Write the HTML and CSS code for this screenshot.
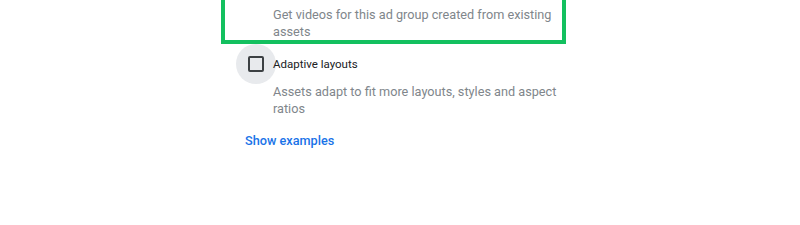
FILE: index.html
```html
<!DOCTYPE html>
<html lang="en">
<head>
    <meta charset="UTF-8">
    <title>Ad group assets</title>
    <link rel="stylesheet" href="styles.css">
</head>
<body>
    <div class="options">
        <div class="highlight">
            <p class="desc">Get videos for this ad group created from existing assets</p>
        </div>
        <div class="option">
            <div class="check-wrap"><span class="check"></span></div>
            <span class="label">Adaptive layouts</span>
        </div>
        <p class="desc desc-lower">Assets adapt to fit more layouts, styles and aspect ratios</p>
        <a class="link" href="#">Show examples</a>
    </div>
</body>
</html>
```
FILE: styles.css
```css
* {
    margin: 0;
    padding: 0;
    box-sizing: border-box;
}
body {
    background: #fff;
    font-family: Roboto, "Liberation Sans", Arial, sans-serif;
}
.options {
    padding-left: 221px;
    width: 800px;
    height: 225px;
    overflow: hidden;
}
.highlight {
    width: 345px;
    margin-top: -20px;
    padding: 22px 4px 0 48px;
    border: 4px solid #13c05f;
}
.desc {
    font-size: 12.7px;
    line-height: 17px;
    color: #80868b;
}
.option {
    display: flex;
    align-items: center;
    margin: 0 0 0 15px;
}
.check-wrap {
    width: 40px;
    height: 40px;
    border-radius: 50%;
    background: #e8eaed;
    display: flex;
    align-items: center;
    justify-content: center;
}
.check {
    width: 16px;
    height: 16px;
    border: 2px solid #3c4043;
    border-radius: 2px;
}
.label {
    margin-left: -3px;
    font-size: 11.5px;
    color: #202124;
}
.desc-lower {
    width: 300px;
    margin: -1px 0 0 52px;
}
.link {
    display: block;
    margin: 15px 0 0 24px;
    font-size: 12.7px;
    line-height: 17px;
    font-weight: 500;
    color: #1a73e8;
    text-decoration: none;
}
```
